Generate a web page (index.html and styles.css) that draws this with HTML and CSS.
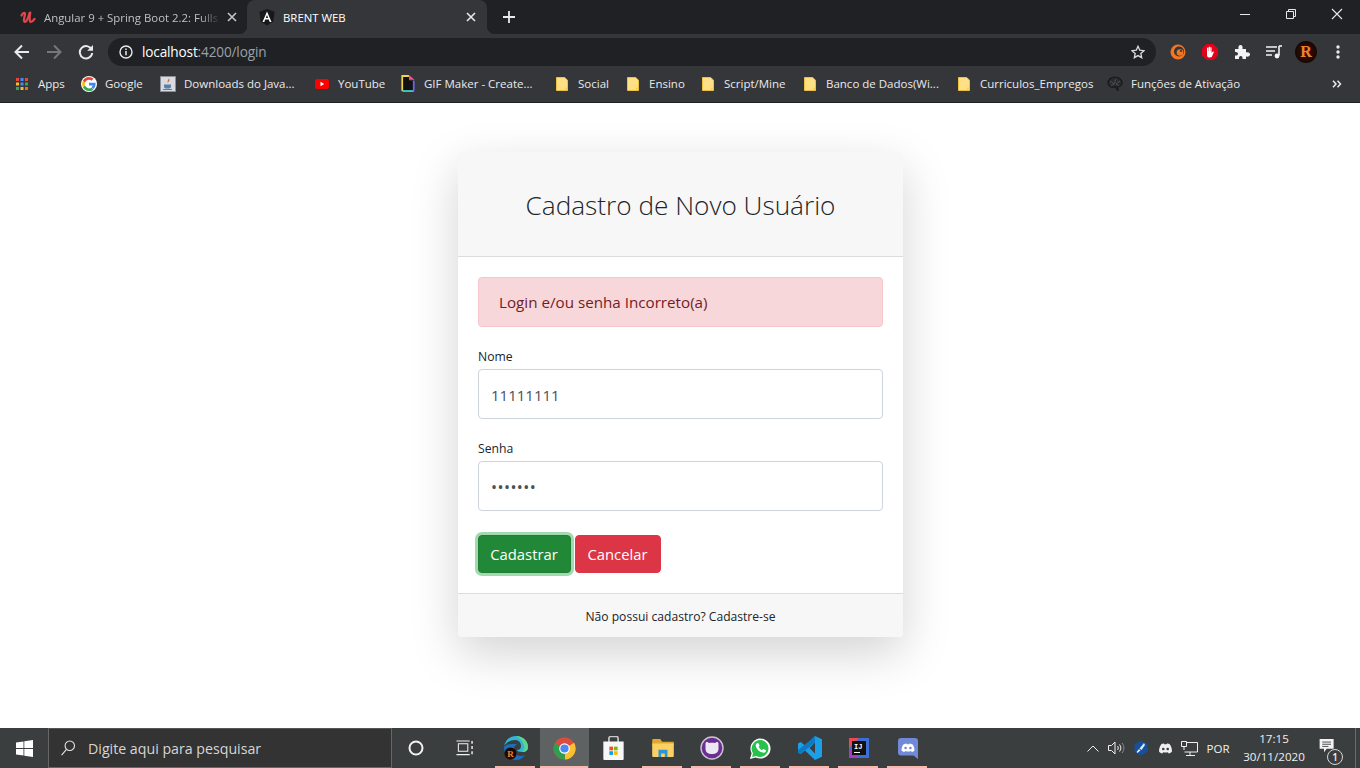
FILE: index.html
```html
<!DOCTYPE html>
<html lang="pt-BR">
<head>
<meta charset="utf-8">
<title>BRENT WEB</title>
<link rel="stylesheet" href="styles.css">
</head>
<body>
<header class="browser">
  <div class="tabstrip">
    <div class="tab">
      <svg width="16" height="16" viewBox="0 0 16 16" fill="none" stroke="#e0474c" stroke-width="2.200" stroke-linecap="round" stroke-linejoin="round"><path d="M1.500 6.500C2.500 4 5 2.800 5 4.800S3.200 10.500 4.200 12.500c1.300 2 4-2.500 5.300-8.500"/><path d="M10.300 3.500C9.500 7.500 9.300 13 10.700 13c1.200 0 2.500-1.200 3.800-3"/></svg>
      <span class="tab-title">Angular 9 + Spring Boot 2.2: Fulls</span>
      <svg class="tab-close" width="10" height="10" viewBox="0 0 10 10" stroke="#c4c7c9" stroke-width="1.600"><path d="M1 1l8 8M9 1l-8 8"/></svg>
    </div>
    <div class="tab tab-active">
      <svg width="16" height="17" viewBox="0 0 16 17"><path d="M8 0L15.500 2.700 14.300 12.600 8 16.500 1.700 12.600.5 2.700z" fill="#17181a"/><path d="M8 2.500L3.500 13h1.800l.9-2.400h3.600l.9 2.400h1.800zm0 3.500l1.200 3.100H6.800z" fill="#fff"/></svg>
      <span class="tab-title tab-title-active">BRENT WEB</span>
      <svg class="tab-close" width="10" height="10" viewBox="0 0 10 10" stroke="#e8eaed" stroke-width="1.600"><path d="M1 1l8 8M9 1l-8 8"/></svg>
    </div>
    <svg class="new-tab" width="12" height="12" viewBox="0 0 12 12" stroke="#e8eaed" stroke-width="1.800"><path d="M6 0v12M0 6h12"/></svg>
    <div class="win-controls">
      <svg width="46" height="28" viewBox="0 0 46 28" stroke="#e8e8e8" fill="none"><path d="M18 14.500h10"/></svg>
      <svg width="46" height="28" viewBox="0 0 46 28" stroke="#e8e8e8" fill="none"><path d="M18.500 11.500h7v7h-7zM20.500 11.500v-2h7v7h-2"/></svg>
      <svg width="46" height="28" viewBox="0 0 46 28" stroke="#e8e8e8" stroke-width="1.100" fill="none"><path d="M18 9l10 10M28 9L18 19"/></svg>
    </div>
  </div>
  <div class="toolbar">
    <svg class="nav" width="16" height="16" viewBox="0 0 16 16" fill="none" stroke="#e8eaed" stroke-width="2"><path d="M15 8H2M8 1.500L1.500 8 8 14.500"/></svg>
    <svg class="nav" width="16" height="16" viewBox="0 0 16 16" fill="none" stroke="#75777b" stroke-width="2"><path d="M1 8h13M8 1.500L14.500 8 8 14.500"/></svg>
    <svg class="nav" width="16" height="16" viewBox="0 0 16 16" fill="none"><path d="M13.600 5.500A6.200 6.200 0 1 0 14.200 9" stroke="#e8eaed" stroke-width="2"/><path d="M15 1v5.800H9.200z" fill="#e8eaed"/></svg>
    <div class="omnibox">
      <svg width="14" height="14" viewBox="0 0 14 14" fill="none"><circle cx="7" cy="7" r="6" stroke="#e8eaed" stroke-width="1.400"/><path d="M7 6v4.200M7 3.500v1.400" stroke="#e8eaed" stroke-width="1.500"/></svg>
      <span class="url"><span class="url-host">localhost</span>:4200/login</span>
      <svg class="star" width="14" height="14" viewBox="0 0 16 16" fill="none" stroke="#dadce0" stroke-width="1.500"><path d="M8 1.500l2 4.500 4.800.5-3.600 3.200 1 4.800L8 12.100 3.800 14.500l1-4.800L1.200 6.500 6 6z"/></svg>
    </div>
    <div class="extensions">
      <svg width="16" height="16" viewBox="0 0 16 16"><circle cx="8" cy="8" r="7.500" fill="#f47521"/><circle cx="9" cy="7.500" r="5" fill="#35363a"/><circle cx="10" cy="8.500" r="3.300" fill="#f47521"/><circle cx="11" cy="7" r="1.100" fill="#35363a"/></svg>
      <svg width="18" height="18" viewBox="0 0 18 18"><path d="M5.500 1h7L17 5.500v7L12.500 17h-7L1 12.500v-7z" fill="#e2001a"/><path d="M6 9V5.200c0-1 1.300-1 1.300 0V8h.3V4.200c0-1 1.400-1 1.400 0V8h.3V4.700c0-1 1.300-1 1.300 0V10l1-1.300c.7-.7 1.600 0 1.100.8L11 13.500c-.5.700-1 .9-2 .9H8c-1.300 0-2-1-2-2.400z" fill="#fff"/></svg>
      <svg width="16" height="16" viewBox="0 0 16 16"><path d="M1 5h3.500C4 2.500 5 1 6.500 1S9 2.500 8.500 5H12v3.500c2.500-.5 4 .5 4 2s-1.500 2.500-4 2V15H8.500c.4-2-.5-3-1.700-3S4.700 13 5 15H1v-3.500c2 .4 3-.5 3-1.700S3 7.700 1 8z" fill="#f1f3f4"/></svg>
      <svg width="16" height="14" viewBox="0 0 16 14" fill="none"><path d="M0 2h11M0 6h9M0 10h6" stroke="#f1f3f4" stroke-width="1.500"/><path d="M13 1v9.500" stroke="#f1f3f4" stroke-width="1.600"/><path d="M13 1h3" stroke="#f1f3f4" stroke-width="1.600"/><circle cx="11" cy="11" r="2.400" fill="#f1f3f4"/></svg>
      <span class="avatar">R</span>
      <svg width="4" height="14" viewBox="0 0 4 14" fill="#e8eaed"><circle cx="2" cy="2" r="1.700"/><circle cx="2" cy="7" r="1.700"/><circle cx="2" cy="12" r="1.700"/></svg>
    </div>
  </div>
  <nav class="bookmarks">
    <a class="bm bm-apps"><svg width="14" height="14" viewBox="0 0 14 14"><path fill="#e8453c" d="M1 1h3v3H1z"/><path fill="#4a8af4" d="M5.500 1h3v3h-3z"/><path fill="#e8453c" d="M10 1h3v3h-3z"/><path fill="#f9bb2d" d="M1 5.500h3v3H1z"/><path fill="#4a8af4" d="M5.500 5.500h3v3h-3z"/><path fill="#3aa757" d="M10 5.500h3v3h-3z"/><path fill="#3aa757" d="M1 10h3v3H1z"/><path fill="#f9bb2d" d="M5.500 10h3v3h-3z"/><path fill="#e8710a" d="M10 10h3v3h-3z"/></svg>Apps</a>
    <a class="bm"><svg width="16" height="16" viewBox="0 0 16 16"><circle cx="8" cy="8" r="8" fill="#fff"/><path d="M14.600 8.100c0-.5 0-.9-.1-1.300H8v2.600h3.700c-.2.800-.6 1.500-1.300 2l2.100 1.600c1.300-1.100 2.100-2.800 2.100-4.900z" fill="#4285f4"/><path d="M8 15c1.800 0 3.400-.6 4.500-1.600l-2.100-1.600c-.6.400-1.400.6-2.400.6-1.800 0-3.300-1.200-3.900-2.800L1.900 11.200C3 13.500 5.300 15 8 15z" fill="#34a853"/><path d="M4.100 9.600c-.3-.8-.3-2.400 0-3.200L1.900 4.800c-.9 1.800-.9 4.600 0 6.400z" fill="#fbbc05"/><path d="M8 3.700c1 0 1.900.4 2.600 1l1.900-1.900C11.300 1.700 9.800 1 8 1 5.300 1 3 2.500 1.900 4.800l2.200 1.600C4.700 4.900 6.200 3.700 8 3.700z" fill="#ea4335"/></svg>Google</a>
    <a class="bm"><svg width="16" height="16" viewBox="0 0 16 16"><path d="M.5.500h15v15H.5z" fill="#d8dce2" stroke="#8a8f98"/><path d="M8.500 2c1 1.500-2 2.500-.5 5 0-1.500 3-2.500.5-5z" fill="#d9632a"/><path d="M4 8.500h7v2c0 1.500-1 2-2 2H6c-1 0-2-.5-2-2z" fill="#5a7fa8"/><path d="M3 13.500h9" stroke="#5a7fa8"/></svg>Downloads do Java...</a>
    <a class="bm"><svg width="16" height="16" viewBox="0 0 16 16"><rect x="1" y="3" width="14" height="10" rx="2.500" fill="#f00"/><path d="M6.500 5.800v4.400L10.200 8z" fill="#fff"/></svg>YouTube</a>
    <a class="bm bm-gif"><svg width="14" height="17" viewBox="0 0 14 18" fill="none"><path d="M1 17V1h7" stroke="#f5d547" stroke-width="2"/><path d="M1 17h12" stroke="#2ecfc0" stroke-width="2"/><path d="M13 17V6" stroke="#7a5cf0" stroke-width="2"/><path d="M8 0l6 5H8z" fill="#f0568c"/><path d="M2 2h6v4h4v10H2z" fill="#111"/></svg>GIF Maker - Create...</a>
    <a class="bm bm-folder"><svg width="12" height="14" viewBox="0 0 13 15"><path d="M.5.500h9l3 3v11H.5z" fill="#ffe084" stroke="#f5c73d"/><path d="M10 14l2.500-2.500H10z" fill="#f5c73d"/></svg>Social</a>
    <a class="bm bm-folder"><svg width="12" height="14" viewBox="0 0 13 15"><path d="M.5.500h9l3 3v11H.5z" fill="#ffe084" stroke="#f5c73d"/><path d="M10 14l2.500-2.500H10z" fill="#f5c73d"/></svg>Ensino</a>
    <a class="bm bm-folder"><svg width="12" height="14" viewBox="0 0 13 15"><path d="M.5.500h9l3 3v11H.5z" fill="#ffe084" stroke="#f5c73d"/><path d="M10 14l2.500-2.500H10z" fill="#f5c73d"/></svg>Script/Mine</a>
    <a class="bm bm-folder"><svg width="12" height="14" viewBox="0 0 13 15"><path d="M.5.500h9l3 3v11H.5z" fill="#ffe084" stroke="#f5c73d"/><path d="M10 14l2.500-2.500H10z" fill="#f5c73d"/></svg>Banco de Dados(Wi...</a>
    <a class="bm bm-folder"><svg width="12" height="14" viewBox="0 0 13 15"><path d="M.5.500h9l3 3v11H.5z" fill="#ffe084" stroke="#f5c73d"/><path d="M10 14l2.500-2.500H10z" fill="#f5c73d"/></svg>Curriculos_Empregos</a>
    <a class="bm"><svg width="16" height="16" viewBox="0 0 16 16" fill="none" stroke="#17181a" stroke-width="1.200"><path d="M1 8c-.5-4 3-7 7-7s7.500 3 7 6.500c-.3 2-2.500 3.500-4.500 3L11 15l-2.500-4C6 11.500 1.500 11 1 8z" fill="#2a2b2e"/><path d="M3 5l4 3 2-5M7 8l-3 2M9 8l4-3M9 8l3 2" stroke="#55575b" stroke-width=".8"/></svg>Funções de Ativação</a>
    <svg class="bm-more" width="10" height="8" viewBox="0 0 10 8" fill="none" stroke="#e8eaed" stroke-width="1.500"><path d="M1 .7L4 4 1 7.300M5.500.7L8.500 4l-3 3.300"/></svg>
  </nav>
</header>

<main class="page">
  <section class="card">
    <div class="card-header"><h3 class="card-title">Cadastro de Novo Usuário</h3></div>
    <form class="card-body">
      <div class="alert">Login e/ou senha Incorreto(a)</div>
      <div class="form-group">
        <label class="label" for="nome">Nome</label>
        <input class="input" id="nome" type="text" value="11111111">
      </div>
      <div class="form-group">
        <label class="label" for="senha">Senha</label>
        <input class="input input-password" id="senha" type="password" value="1234567">
      </div>
      <div class="actions">
        <button class="btn btn-success" type="button">Cadastrar</button>
        <button class="btn btn-danger" type="button">Cancelar</button>
      </div>
    </form>
    <div class="card-footer">Não possui cadastro? Cadastre-se</div>
  </section>
</main>

<footer class="taskbar">
  <div class="tb-cell">
    <svg width="17" height="17" viewBox="0 0 17 17" fill="#fff"><path d="M0 2.500L7.500 1.400v6.700H0zM8.300 1.300L17 0v8.100H8.300zM0 8.900h7.500v6.700L0 14.500zM8.300 8.900H17V17l-8.700-1.300z"/></svg>
  </div>
  <div class="search">
    <svg width="16" height="16" viewBox="0 0 16 18" fill="none" stroke="#e8e8e8" stroke-width="1.200"><circle cx="10" cy="6.500" r="5.300"/><path d="M6.300 10.500L.8 17"/></svg>
    <span>Digite aqui para pesquisar</span>
  </div>
  <div class="tb-cell">
    <svg width="16" height="16" viewBox="0 0 16 16" fill="none" stroke="#f2f2f2" stroke-width="2"><circle cx="8" cy="8" r="6.500"/></svg>
  </div>
  <div class="tb-cell">
    <svg width="17" height="16" viewBox="0 0 18 16" fill="none" stroke="#f2f2f2" stroke-width="1.100"><path d="M2.500 3.500h10v8h-10zM.5.500h14M.5 15h14"/><path d="M17 .5v3M17 6v3M17 11.500v3" stroke-width="1.500"/></svg>
  </div>
  <div class="tb-apps">
    <div class="app app-on">
      <svg width="26" height="26" viewBox="0 0 26 26"><path d="M1 12C2 5 7 1 13 1c7 0 12 5 12 11 0 3-2 5-6 5-3 0-5-1-5-2 2 0 4-1 4-4 0-4-3-6-6-6-5 0-9 3-11 6z" fill="#2fb6d8"/><path d="M13 1c7 0 12 5 12 11 0 3-2 5-6 5 3-2 3-6 1-9-2-4-5-6-7-7z" fill="#5fd48a"/><path d="M1 12c0 8 6 13 12 13 4 0 7-2 9-5-4 2-9 1-11-3-1-3 0-6 3-8-6 0-11 0-13 3z" fill="#1a6fc0"/><circle cx="7.500" cy="18.500" r="6" fill="#1a0a05"/><text class="mini-r" x="7.500" y="21.500">R</text></svg>
    </div>
    <div class="app app-on app-active">
      <svg width="23" height="23" viewBox="0 0 24 24"><circle cx="12" cy="12" r="11.500" fill="#dd4b3e"/><path d="M12 12L22 6a11.500 11.500 0 0 1-9.500 17.500z" fill="#fbc02d"/><path d="M12 12l-10-5.500A11.500 11.500 0 0 0 12.500 23.500z" fill="#2f9e4f"/><circle cx="12" cy="12" r="5.500" fill="#fff"/><circle cx="12" cy="12" r="4.300" fill="#4a89f3"/></svg>
    </div>
    <div class="app">
      <svg width="23" height="24" viewBox="0 0 24 26"><path d="M7 7V3c0-1.500 1-2.500 2-2.500h6c1 0 2 1 2 2.500v4" fill="none" stroke="#c8c8c8" stroke-width="1.800"/><path d="M1 6h22v19a1 1 0 0 1-1 1H2a1 1 0 0 1-1-1z" fill="#f7f7f7"/><path d="M7.500 11.500h4v4h-4z" fill="#f25022"/><path d="M12.500 11.500h4v4h-4z" fill="#7fba00"/><path d="M7.500 16.500h4v4h-4z" fill="#00a4ef"/><path d="M12.500 16.500h4v4h-4z" fill="#ffb900"/></svg>
    </div>
    <div class="app app-on">
      <svg width="22" height="18" viewBox="0 0 24 20"><path d="M0 1.500C0 .7.500 0 1.300 0H9l2 3h13v4H0z" fill="#e0a82e"/><path d="M0 5h24v13.500c0 .8-.7 1.500-1.500 1.500h-21C.7 20 0 19.300 0 18.500z" fill="#fad165"/><path d="M7 12h10v8h-3v-4h-4v4H7z" fill="#2d95d3"/></svg>
    </div>
    <div class="app app-on">
      <svg width="24" height="24" viewBox="0 0 24 24"><circle cx="12" cy="12" r="11" fill="#6b2f91" stroke="#ccc3d4" stroke-width="1.400"/><path d="M5.500 8c0-2.500 1.800-2.500 3.500-1 2-.5 4-.5 6 0 1.700-1.500 3.500-1.500 3.500 1v5c0 3-2.500 5-6.500 5s-6.500-2-6.500-5z" fill="#ece8f2"/></svg>
    </div>
    <div class="app app-on">
      <svg width="23" height="23" viewBox="0 0 24 24"><path d="M1 23l1.700-6A10.500 10.500 0 1 1 7 21.300z" fill="#fff"/><path d="M3.200 20.800l1-3.900A8.800 8.800 0 1 1 7.400 19.800z" fill="#27c24c"/><path d="M8.500 6.500c.5-.5 1.300-.5 1.600.2l.8 1.800c.2.400 0 .8-.3 1.100l-.6.700c.8 1.500 2 2.700 3.600 3.500l.8-.9c.3-.3.700-.4 1.100-.2l1.700.9c.5.300.6.900.3 1.400-.7 1.200-2 1.700-3.300 1.300-3.700-1-6.200-3.500-7.100-7-.2-1 .1-2 1-2.800z" fill="#fff"/></svg>
    </div>
    <div class="app app-on">
      <svg width="24" height="24" viewBox="0 0 24 24"><path d="M17 0l7 3.300v17.400L17 24 7 14.500 2.700 18 0 16.500V7.500L2.700 6 7 9.500zM17 6.500L11.500 12l5.500 5.500z" fill="#1a9fe8"/><path d="M17 0v6.500L2.700 18 0 16.500V14L14 3z" fill="#0f79c2"/></svg>
    </div>
    <div class="app app-on">
      <svg width="20" height="20" viewBox="0 0 20 20"><path d="M0 0h20v20H0z" fill="#3a6fd8"/><path d="M0 0h10L0 10z" fill="#f0484e"/><path d="M0 10l10 10H0z" fill="#a13fc4"/><path d="M3 3h14v14H3z" fill="#111"/><text class="ij" x="5" y="11">IJ</text><path d="M5 14.500h6" stroke="#fff"/></svg>
    </div>
    <div class="app app-on">
      <svg width="20" height="21" viewBox="0 0 20 21"><path d="M3 0h14a3 3 0 0 1 3 3v18l-4.500-3.500H3a3 3 0 0 1-3-3V3a3 3 0 0 1 3-3z" fill="#7289da"/><path d="M3.500 12.500c0-3 1-5 1.900-6 1.500-1 3.100-1 3.100-1l.3.700h2.400l.3-.7s1.600 0 3.100 1c.9 1 1.900 3 1.900 6-1 1.200-2.700 1.500-2.700 1.500l-.7-1c-2 .7-4 .7-6 0l-.7 1s-1.700-.3-2.700-1.500z" fill="#fff"/><circle cx="7.600" cy="10" r="1.300" fill="#7289da"/><circle cx="12.400" cy="10" r="1.300" fill="#7289da"/></svg>
    </div>
  </div>
  <div class="tray">
    <div class="tray-cell"><svg width="12" height="7" viewBox="0 0 12 7" fill="none" stroke="#f0f0f0"><path d="M.5 6.500L6 1l5.500 5.500"/></svg></div>
    <div class="tray-cell"><svg width="18" height="14" viewBox="0 0 18 14" fill="none" stroke="#f0f0f0"><path d="M.5 4.500h3L7 1v12L3.500 9.500h-3z"/><path d="M9.500 5c1 1 1 3 0 4M11.500 3.500c1.800 2 1.800 5 0 7"/><path d="M14 2c2.500 3 2.500 7 0 10" stroke="#8a8c8d"/></svg></div>
    <div class="tray-cell"><svg width="16" height="16" viewBox="0 0 16 16"><path d="M8 .5l6.500 3.700v7.600L8 15.500l-6.500-3.700V4.200z" fill="#16509a"/><path d="M11 3L6.500 8.500l2 1.500L12 5zM6 9l-2.500 3 1 1 3-2.500z" fill="#dfe8f3"/></svg></div>
    <div class="tray-cell"><svg width="15" height="11" viewBox="0 0 15 11"><path d="M1 8.500c0-3 1-6 2.500-7.500C5 .5 6 .5 6 .5l.3.800h2.400L9 .5s1 0 2.500.5C13 2.500 14 5.500 14 8.500c-1 1.500-3.200 2-3.200 2l-1-1.300c-1.600.5-3 .5-4.600 0l-1 1.300S2 10 1 8.500z" fill="#f0f0f0"/><circle cx="5.300" cy="6" r="1.300" fill="#3b3e3f"/><circle cx="9.700" cy="6" r="1.300" fill="#3b3e3f"/></svg></div>
    <div class="tray-cell"><svg width="17" height="15" viewBox="0 0 17 15" fill="none" stroke="#f0f0f0"><path d="M3.500 1.500h13v9.500h-13M9 11v3M5 14.500h9"/><path d="M.5.500h5v5h-5z" fill="#3b3e3f"/><path d="M3 5.500V9"/></svg></div>
    <div class="tray-lang">POR</div>
    <div class="clock"><span>17:15</span><span>30/11/2020</span></div>
    <div class="notif">
      <svg width="17" height="14" viewBox="0 0 18 16" fill="#f2f2f2"><path d="M0 0h16v11H8l-3 4v-4H0z"/><path d="M3 3.500h10M3 6h10M3 8.500h7" stroke="#3b3e3f"/></svg>
      <span class="badge">1</span>
    </div>
    <div class="show-desktop"></div>
  </div>
</footer>
</body>
</html>
```
FILE: styles.css
```css
* { box-sizing: border-box; }
html, body { margin: 0; height: 100%; }
body {
  width: 1360px;
  height: 768px;
  overflow: hidden;
  display: flex;
  flex-direction: column;
  background: #fff;
  font-family: "Open Sans", "Liberation Sans", sans-serif;
}

/* Browser chrome */
.browser { background: #35363a; border-bottom: 1px solid #1f2023; height: 103px; flex: none; }
.tabstrip {
  height: 34px;
  background: #202124;
  display: flex;
  align-items: center;
  padding-left: 8px;
}
.tab {
  width: 239px;
  height: 34px;
  display: flex;
  align-items: center;
  padding: 0 10px 0 12px;
  flex: none;
}
.tab-title {
  margin-left: 8px;
  width: 177px;
  white-space: nowrap;
  font-size: 11.4px;
  color: #bdc1c6;
  -webkit-mask-image: linear-gradient(to right, #000 88%, transparent 100%);
  mask-image: linear-gradient(to right, #000 88%, transparent 100%);
}
.tab-title-active { color: #fff; width: 178px; -webkit-mask-image: none; mask-image: none; }
.tab-close { margin-left: auto; }
.tab-active {
  position: relative;
  width: 240px;
  background: #35363a;
  border-radius: 8px 8px 0 0;
  padding: 0 11px 0 12px;
}
.tab-active::before, .tab-active::after {
  content: "";
  position: absolute;
  bottom: 0;
  width: 8px;
  height: 8px;
}
.tab-active::before { left: -8px; background: radial-gradient(circle at 0 0, transparent 8px, #35363a 8.5px); }
.tab-active::after { right: -8px; background: radial-gradient(circle at 100% 0, transparent 8px, #35363a 8.5px); }
.new-tab { margin-left: 16px; }
.win-controls { margin-left: auto; display: flex; align-self: flex-start; }
.toolbar { height: 36px; display: flex; align-items: center; padding-left: 14px; }
.nav { margin-right: 16px; flex: none; }
.omnibox {
  width: 1048px;
  height: 28px;
  margin-left: -2px;
  background: #202124;
  border-radius: 14px;
  display: flex;
  align-items: center;
  padding: 0 11px;
}
.url { margin-left: 9px; font-size: 13.6px; line-height: 28px; height: 28px; color: #9aa0a6; letter-spacing: -.15px; }
.url-host { color: #fff; }
.star { margin-left: auto; }
.extensions {
  display: grid;
  grid-template-columns: repeat(6, 32px);
  justify-items: center;
  align-items: center;
  margin-left: 6px;
}
.avatar {
  width: 22px;
  height: 22px;
  border-radius: 50%;
  background: radial-gradient(circle at 50% 50%, #3a0f05, #0a0402);
  color: #f0832a;
  font: 700 16px/22px "Liberation Serif", serif;
  text-align: center;
}
.bookmarks {
  height: 32px;
  display: grid;
  grid-template-columns: 67px 79px 154px 85px 155px 71px 75px 102px 154px 151px 225px 10px;
  align-items: center;
  padding: 0 0 5px 14px;
  font-size: 11.5px;
  color: #e8eaed;
}
.bm { display: flex; align-items: center; gap: 8px; white-space: nowrap; }
.bm svg { flex: none; }
.bm-apps { gap: 9px; padding-left: 1px; }
.bm-gif { gap: 9px; padding-left: 2px; }
.bm-folder { gap: 10px; padding-left: 2px; }

/* Page */
.page { flex: 1; display: flex; justify-content: center; padding-top: 49px; padding-left: 1px; min-height: 0; }
.card {
  width: 445px;
  height: 485px;
  border-radius: 4px;
  background: #fff;
  box-shadow: 0 16px 48px rgba(0,0,0,.175);
  display: flex;
  flex-direction: column;
}
.card-header {
  height: 105px;
  padding-top: 1px;
  background: #f7f7f7;
  border-bottom: 1px solid #dcdcdc;
  border-radius: 4px 4px 0 0;
  display: flex;
  align-items: center;
  justify-content: center;
}
.card-title { margin: 0; font-size: 26.2px; font-weight: 300; color: #212529; }
.card-body { flex: 1; padding: 20px; font-size: 14px; }
.alert {
  height: 50px;
  background: #f8d7da;
  border: 1px solid #f5c6cb;
  border-radius: 4px;
  color: #721c24;
  padding: 0 20px;
  display: flex;
  align-items: center;
  font-size: 15.2px;
}
.form-group { margin-top: 16px; }
.label { display: block; height: 26px; line-height: 28px; font-size: 12.2px; color: #212529; }
.input {
  display: block;
  width: 100%;
  height: 50px;
  border: 1px solid #ced4da;
  border-radius: 4px;
  padding: 2px 12px 0;
  font: 15px "Open Sans", sans-serif;
  color: #495057;
  outline: 0;
  background: #fff;
}
.input-password { font-size: 16px; letter-spacing: .45px; }
.actions { margin-top: 24px; display: flex; gap: 4px; }
.btn {
  height: 38px;
  border-radius: 4px;
  padding: 0 11px 0 10px;
  color: #fff;
  font: 14.8px "Open Sans", sans-serif;
  cursor: pointer;
}
.btn-success { width: 93px; background: #218838; border: 1px solid #1e7e34; box-shadow: 0 0 0 3px rgba(72,180,97,.5); }
.btn-danger { width: 86px; background: #dc3545; border: 1px solid #dc3545; }
.card-footer {
  height: 44px;
  padding-top: 2px;
  background: #f7f7f7;
  border-top: 1px solid #dcdcdc;
  border-radius: 0 0 4px 4px;
  display: flex;
  align-items: center;
  justify-content: center;
  font-size: 12.1px;
  color: #212529;
}

/* Taskbar */
.taskbar {
  height: 40px;
  flex: none;
  background: #3b3e3f;
  display: flex;
  color: #f0f0f0;
}
.tb-cell { width: 48px; display: flex; align-items: center; justify-content: center; flex: none; }
.search {
  width: 344px;
  flex: none;
  background: #333;
  border: 1px solid #666;
  border-top-color: #555;
  display: flex;
  align-items: center;
  gap: 12px;
  padding-left: 11px;
  font-size: 14.2px;
  color: #d6d6d6;
}
.tb-apps { display: flex; margin-left: 3px; }
.app {
  width: 49px;
  display: flex;
  align-items: center;
  justify-content: center;
  position: relative;
}
.app-on::after {
  content: "";
  position: absolute;
  left: 4px;
  right: 5px;
  bottom: 0;
  height: 2px;
  background: #f7b9ae;
}
.app-active { background: #5f6262; }
.app-active::after { left: 0; right: 1px; }
.mini-r { font: 700 9px "Liberation Serif", serif; fill: #f0832a; text-anchor: middle; }
.ij { font: 700 7px "Liberation Mono", monospace; fill: #fff; }
.tray { margin-left: auto; display: flex; align-items: center; height: 100%; }
.tray-cell { width: 24px; display: flex; justify-content: center; align-items: center; }
.tray-lang { width: 34px; text-align: center; font-size: 11.5px; }
.clock {
  width: 58px;
  margin-left: 10px;
  display: flex;
  flex-direction: column;
  align-items: center;
  font-size: 11.6px;
  line-height: 18px;
  white-space: nowrap;
}
.notif { width: 52px; height: 100%; position: relative; display: flex; align-items: center; padding-left: 16px; padding-bottom: 5px; }
.badge {
  position: absolute;
  left: 24px;
  top: 21px;
  width: 16px;
  height: 16px;
  border-radius: 50%;
  border: 1px solid #d8d8d8;
  background: #3b3e3f;
  font-size: 10px;
  line-height: 14px;
  text-align: center;
  font-weight: 600;
}
.show-desktop { width: 5px; height: 100%; border-left: 1px solid #6a6c6d; }
```
